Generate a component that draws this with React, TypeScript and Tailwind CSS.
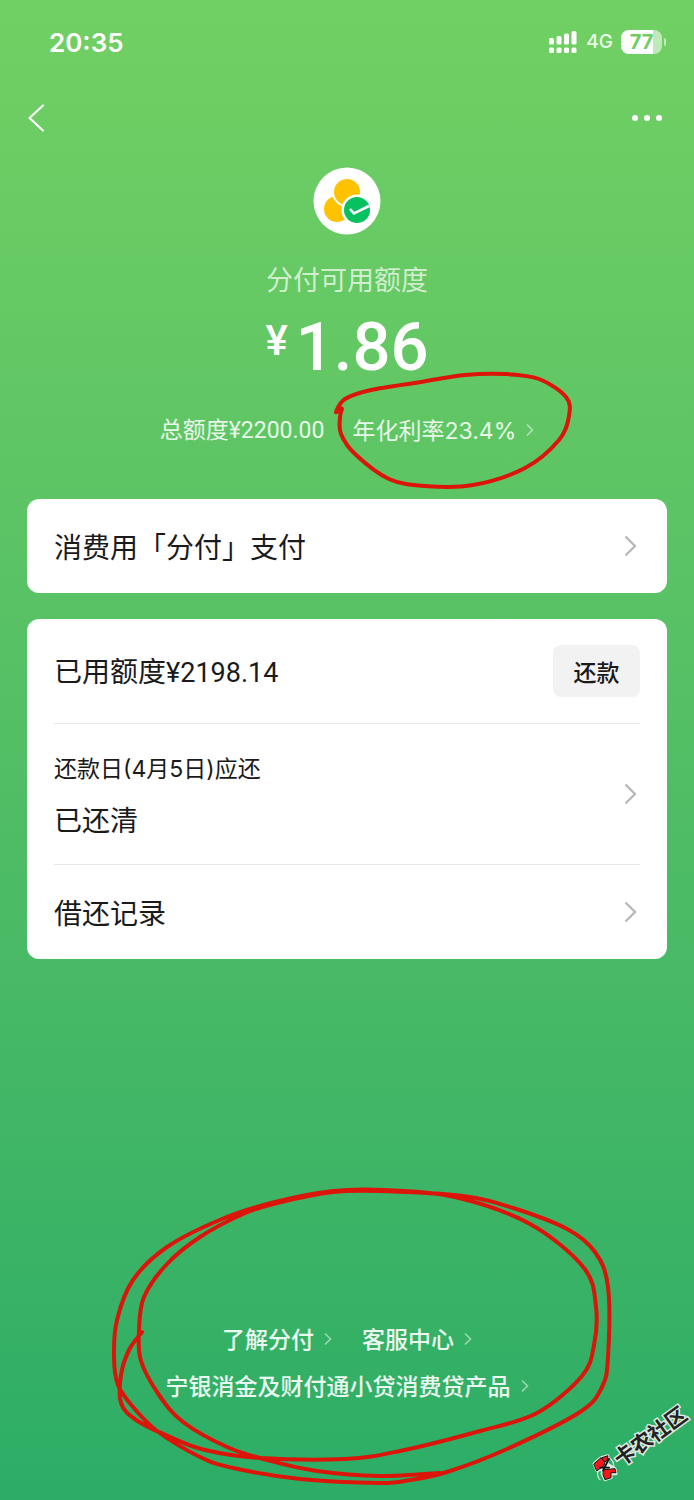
import clsx from 'clsx';

type Point = [number, number];

interface ChevronProps {
    className?: string;
    small?: boolean;
}

interface MarkerProps {
    points: Point[];
    viewBox: string;
    className: string;
}

const rateCircle: Point[] = [
    [343, 407], [338, 411], [347, 398], [373, 389], [423, 381], [467, 374],
    [507, 373], [541, 378], [568, 396], [571, 415], [561, 439], [527, 467],
    [475, 484], [427, 485], [391, 478], [357, 453], [343, 433], [342, 416],
    [344, 408],
];

const footerCircle: Point[] = [
    [142, 1332], [129, 1350], [121, 1375], [121, 1403], [136, 1420],
    [170, 1437], [205, 1450], [260, 1458], [345, 1459], [400, 1451],
    [480, 1431], [537, 1413], [582, 1376], [594, 1345], [596, 1307],
    [584, 1268], [530, 1224], [455, 1197], [385, 1190], [333, 1191],
    [275, 1202], [222, 1219], [167, 1247], [133, 1280], [117, 1320],
    [114, 1357], [118, 1385], [133, 1407], [157, 1431], [200, 1457],
    [233, 1468], [300, 1479], [380, 1483], [410, 1480], [447, 1472],
    [507, 1449], [580, 1412], [602, 1387], [608, 1357], [608, 1287],
    [595, 1252], [567, 1229], [513, 1208], [463, 1196], [380, 1191],
    [333, 1192], [277, 1203], [243, 1214], [200, 1237], [167, 1264],
    [144, 1297], [139, 1330], [141, 1361], [159, 1395], [183, 1422],
    [227, 1447], [267, 1460], [317, 1471], [380, 1476], [440, 1473],
];

// Catmull-Rom points to a cubic bezier path
const smoothPath = (points: Point[]) => {
    let d = `M${points[0][0]} ${points[0][1]}`;
    for (let i = 0; i < points.length - 1; i++) {
        const a = points[Math.max(i - 1, 0)];
        const b = points[i];
        const c = points[i + 1];
        const e = points[Math.min(i + 2, points.length - 1)];
        d += `C${b[0] + (c[0] - a[0]) / 6} ${b[1] + (c[1] - a[1]) / 6} ${c[0] - (e[0] - b[0]) / 6} ${c[1] - (e[1] - b[1]) / 6} ${c[0]} ${c[1]}`;
    }
    return d;
};

const Marker: React.FC<MarkerProps> = ({ points, viewBox, className }) => (
    <svg
        aria-hidden="true"
        viewBox={viewBox}
        className={clsx('absolute max-w-none pointer-events-none', className)}
        fill="none"
        stroke="#dc150b"
        strokeWidth="4"
        strokeLinecap="round"
        strokeLinejoin="round"
    >
        <path d={smoothPath(points)} />
    </svg>
);

const Chevron: React.FC<ChevronProps> = ({ className, small }) => (
    <svg
        aria-hidden="true"
        viewBox={small ? '0 0 8 14' : '0 0 16 22'}
        className={clsx('shrink-0', small ? 'w-2 h-[14px]' : 'w-4 h-[22px]', className)}
        fill="none"
        stroke="currentColor"
        strokeWidth={small ? 1.6 : 2.3}
    >
        <path d={small ? 'M1 1.5 L6.5 7 L1 12.5' : 'M1.5 1.5 L11 11 L1.5 20.5'} />
    </svg>
);

const StatusBar = () => (
    <div className="h-21 pl-[49px] pr-7 flex items-center justify-between font-['Inter',sans-serif]">
        <span className="text-[26px] font-semibold">20:35</span>
        <div className="flex items-center gap-2">
            <svg aria-hidden="true" viewBox="0 0 30 24" className="w-[30px] h-6" fill="currentColor">
                <rect x="1" y="8" width="5" height="6.5" rx="1.5" />
                <rect x="8.5" y="6" width="5" height="8.5" rx="1.5" />
                <rect x="16" y="3.5" width="5" height="11" rx="1.5" />
                <rect x="23.5" y="1" width="5" height="13.5" rx="1.5" />
                <rect x="1" y="17.5" width="5" height="5.5" rx="1.5" />
                <rect x="8.5" y="17.5" width="5" height="5.5" rx="1.5" />
                <rect x="16" y="17.5" width="5" height="5.5" rx="1.5" />
                <rect x="23.5" y="17.5" width="5" height="5.5" rx="1.5" />
            </svg>
            <span className="text-[19px] font-medium text-white/85">4G</span>
            <div className="flex items-center gap-[2px]">
                <div className="w-[41px] h-6 rounded-lg bg-linear-to-r from-white from-77% to-white/55 to-77% flex items-center justify-center text-xl font-bold text-[#6fce63]">
                    77
                </div>
                <div className="w-[2px] h-2 rounded-r bg-white/55" />
            </div>
        </div>
    </div>
);

const App = () => {
    return (
        <main className="relative min-h-screen overflow-hidden flex flex-col bg-linear-to-b from-[#71d063] to-[#2bad66] text-white font-['Noto_Sans_CJK_SC',sans-serif]">
            <StatusBar />
            <nav className="h-[67px] px-7 flex items-center justify-between">
                <button type="button" aria-label="返回">
                    <svg viewBox="0 0 16 28" className="w-4 h-7" fill="none" stroke="currentColor" strokeWidth="2.2" strokeLinecap="round">
                        <path d="M15 1.5 L1.5 14 L15 26.5" />
                    </svg>
                </button>
                <button type="button" aria-label="更多">
                    <svg viewBox="0 0 34 8" className="w-[34px] h-2" fill="currentColor">
                        <circle cx="3" cy="4" r="3" />
                        <circle cx="15" cy="4" r="3" />
                        <circle cx="27" cy="4" r="3" />
                    </svg>
                </button>
            </nav>

            <section className="pt-4 flex flex-col items-center">
                <svg aria-hidden="true" viewBox="0 0 68 68" className="size-17">
                    <circle cx="34" cy="34" r="33.5" fill="#fff" />
                    <circle cx="24" cy="42" r="13" fill="#ffc200" />
                    <circle cx="34" cy="25" r="15" fill="#fff" />
                    <circle cx="34" cy="25" r="13" fill="#ffc200" />
                    <circle cx="44" cy="43" r="15.5" fill="#fff" />
                    <circle cx="44" cy="43" r="13" fill="#07c160" />
                    <path d="M37 42 L41 46.5 L56 39" fill="none" stroke="#fff" strokeWidth="2.6" />
                </svg>
                <h1 className="mt-6 text-[27px] leading-10 text-white/70">分付可用额度</h1>
                <p className="h-24 flex items-center gap-2 font-['Roboto',sans-serif] font-medium">
                    <span className="pb-3 text-[42px] leading-none">¥</span>
                    <span className="text-[67px] leading-none">1.86</span>
                </p>
                <div className="h-[70px] flex items-center gap-7 text-[23px] text-white/85">
                    <span>
                        总额度<span className="font-['Roboto',sans-serif]">¥2200.00</span>
                    </span>
                    <a href="#rate" className="relative flex items-center gap-[10px]">
                        <span>
                            年化利率<span className="font-['Inter',sans-serif]">23.4%</span>
                        </span>
                        <Chevron small className="text-white/50" />
                        <Marker
                            points={rateCircle}
                            viewBox="330 366 250 126"
                            className="-left-6 top-1/2 -translate-y-1/2 w-[250px] h-[126px]"
                        />
                    </a>
                </div>
            </section>

            <div className="mt-[34px] px-[27px] flex flex-col gap-[26px] text-[28px] text-[#1a1a1a]">
                <a href="#pay" className="h-[94px] px-[27px] flex items-center justify-between bg-white rounded-xl">
                    消费用「分付」支付
                    <Chevron className="text-[#b8b8b8]" />
                </a>
                <section className="px-[27px] bg-white rounded-xl divide-y divide-[#e8e8e8]">
                    <div className="h-[105px] flex items-center justify-between">
                        <span>
                            已用额度<span className="text-[27px] font-['Roboto',sans-serif]">¥2198.14</span>
                        </span>
                        <button type="button" className="w-[87px] h-[52px] rounded-lg bg-[#f2f2f2] text-[23px] font-medium">
                            还款
                        </button>
                    </div>
                    <a href="#bill" className="h-[141px] flex items-center justify-between">
                        <span className="flex flex-col gap-3">
                            <span className="text-[23px] leading-9">
                                还款日<span className="font-['Inter',sans-serif]">(4</span>月<span className="font-['Inter',sans-serif]">5</span>日<span className="font-['Inter',sans-serif]">)</span>应还
                            </span>
                            <span className="leading-10">已还清</span>
                        </span>
                        <Chevron className="text-[#b8b8b8]" />
                    </a>
                    <a href="#records" className="h-[94px] flex items-center justify-between">
                        借还记录
                        <Chevron className="text-[#b8b8b8]" />
                    </a>
                </section>
            </div>

            <footer className="relative mt-auto pb-[91px] flex flex-col items-center text-[23px] font-medium leading-[47px] text-white/90">
                <div className="flex gap-[30px]">
                    <a href="#about" className="flex items-center gap-[10px]">
                        了解分付
                        <Chevron small className="text-white/50" />
                    </a>
                    <a href="#support" className="flex items-center gap-[10px]">
                        客服中心
                        <Chevron small className="text-white/50" />
                    </a>
                </div>
                <a href="#products" className="flex items-center gap-[10px]">
                    宁银消金及财付通小贷消费贷产品
                    <Chevron small className="text-white/50" />
                </a>
                <Marker
                    points={footerCircle}
                    viewBox="80 1180 534 312"
                    className="bottom-2 left-1/2 -translate-x-1/2 w-[534px] h-[312px]"
                />
            </footer>

            <div className="absolute right-0 bottom-11 flex items-center -rotate-36">
                <svg aria-hidden="true" viewBox="5 5 26 26" className="size-[26px] rotate-36 overflow-visible" strokeLinejoin="round" strokeLinecap="round">
                    <path d="M7 14 L14 8 L21 6 L20 14 L28 19 L29 24 L24 24 L24 28 L18 30 L15 24 L16 19 L10 21 Z" fill="#dfe8e0" stroke="#dfe8e0" strokeWidth="3" />
                    <path d="M11 21 A9 9 0 0 0 13 30 M21 7 A12 12 0 0 1 27 17" fill="none" stroke="#dfe8e0" strokeWidth="1.2" />
                    <path d="M7 14 L14 8 L18 12 L17 16 L10 21 Z" fill="#f01818" stroke="#111" />
                    <path d="M15 8 L21 6 L20 11 L18 12 Z" fill="#f01818" stroke="#111" />
                    <path d="M17 20 L28 19 L29 23 L24 23 L24 28 L18 30 L16 25 Z" fill="#f01818" stroke="#111" />
                    <path d="M22 9 L16 21 M13 18 L22 18" fill="none" stroke="#111" strokeWidth="1.8" />
                </svg>
                <span className="text-[21px] leading-6 font-bold text-[#222] [-webkit-text-stroke:3px_#dfe8e0] [paint-order:stroke_fill]">
                    卡农社区
                </span>
            </div>
        </main>
    );
};

export default App;
